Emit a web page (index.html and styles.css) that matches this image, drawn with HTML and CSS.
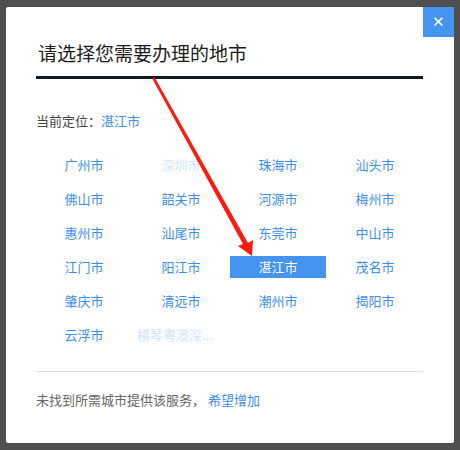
FILE: index.html
```html
<!DOCTYPE html>
<html lang="zh-CN">
<head>
    <meta charset="UTF-8">
    <title>选择城市</title>
    <link rel="stylesheet" href="styles.css">
</head>
<body>
    <div class="dialog">
        <button class="close">&#x2715;</button>
        <h1 class="title">请选择您需要办理的地市</h1>
        <p class="current">当前定位：<a class="link">湛江市</a></p>
        <ul class="cities">
            <li>广州市</li>
            <li class="off">深圳市</li>
            <li>珠海市</li>
            <li>汕头市</li>
            <li>佛山市</li>
            <li>韶关市</li>
            <li>河源市</li>
            <li>梅州市</li>
            <li>惠州市</li>
            <li>汕尾市</li>
            <li>东莞市</li>
            <li>中山市</li>
            <li>江门市</li>
            <li>阳江市</li>
            <li class="active">湛江市</li>
            <li>茂名市</li>
            <li>肇庆市</li>
            <li>清远市</li>
            <li>潮州市</li>
            <li>揭阳市</li>
            <li>云浮市</li>
            <li class="off long">横琴粤澳深...</li>
        </ul>
        <div class="footer">
            未找到所需城市提供该服务， <a class="link">希望增加</a>
        </div>
        <svg class="arrow" width="460" height="450" viewBox="0 0 460 450">
            <polygon points="153,78 155,78 248,243 253,240 252,256 238,246 243,244 153,80" fill="#ff1a10"/>
        </svg>
    </div>
</body>
</html>
```

FILE: styles.css
```css
body {
    margin: 0;
    padding: 7px 6px;
    background: #4f4f4f;
    font-family: "Noto Sans CJK SC", "Noto Sans", sans-serif;
}

.dialog {
    background: #fff;
    width: 448px;
    height: 436px;
    box-sizing: border-box;
    padding: 32px 31px 0 30px;
    border-radius: 2px;
}

.close {
    position: absolute;
    left: 423px;
    top: 7px;
    width: 31px;
    height: 30px;
    border: none;
    background: #4594f0;
    color: #fff;
    font-size: 15px;
    padding: 0;
    cursor: pointer;
}

.title {
    margin: 0;
    font-size: 19px;
    font-weight: normal;
    color: #1c1c1c;
    line-height: 28px;
    padding-left: 2px;
    padding-bottom: 9px;
    border-bottom: 3px solid #141c26;
}

.current {
    margin: 32px 0 0;
    font-size: 13px;
    color: #444;
    line-height: 20px;
}

.link {
    color: #3d8fef;
}

.cities {
    list-style: none;
    margin: 23px 0 0;
    padding: 0;
    display: grid;
    grid-template-columns: repeat(4, 1fr);
    row-gap: 12px;
    column-gap: 1px;
}

.cities li {
    font-size: 13px;
    line-height: 22px;
    color: #3d8fef;
    text-align: center;
    white-space: nowrap;
}

.cities li.off {
    color: #d2e5fb;
}

.cities li.long {
    text-align: left;
    padding-left: 4px;
}

.cities li.active {
    background: #4594f0;
    color: #fff;
}

.footer {
    margin-top: 25px;
    border-top: 1px solid #e2e2e2;
    padding-top: 18px;
    font-size: 13px;
    color: #666;
    line-height: 20px;
}

.arrow {
    position: absolute;
    left: 0;
    top: 0;
    pointer-events: none;
}
```
